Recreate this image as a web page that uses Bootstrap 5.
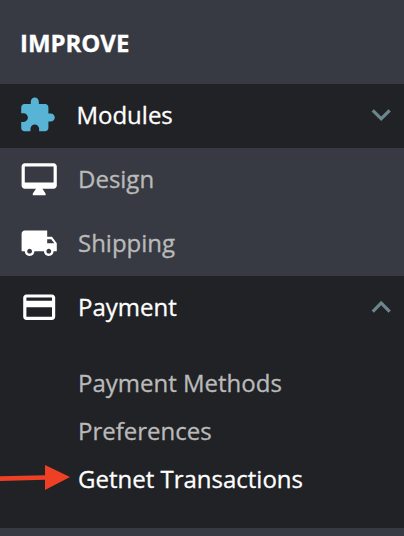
<!DOCTYPE html>
<html lang="en">
<head>
<meta charset="utf-8">
<meta name="viewport" content="width=device-width, initial-scale=1">
<title>Improve menu</title>
<link href="https://cdn.jsdelivr.net/npm/bootstrap@5.3.0/dist/css/bootstrap.min.css" rel="stylesheet">
<style>
body { font-family: "Open Sans", "Noto Sans", sans-serif; background: #373a42; color: #bababa; overflow: hidden; }
.side-menu { height: 536px; font-size: 24px; line-height: 36px; -webkit-text-stroke: .3px currentColor; }
.menu-title { height: 84px; padding: 3px 0 0 20px; font-size: 24px; letter-spacing: -.05px; }
.menu-row { height: 64px; padding: 0 4px 2px 19.6px; }
.menu-row svg { width: 38.4px; height: 38.4px; flex: none; fill: #fff; }
.menu-row .menu-label { margin-left: 20px; }
.menu-row.modules { padding-left: 18px; }
.menu-row.modules .menu-icon { fill: #58b4d4; }
.menu-row .chevron { fill: #6c868e; }
.panel-dark { background: #212226; color: #fff; }
.payment-panel { height: 252px; }
.submenu { padding: 19px 0 0 78px; color: #bababa; }
.submenu li { height: 48px; line-height: 48px; }
.pointer-arrow { left: 0; top: 460px; }
</style>
</head>
<body>
<nav class="side-menu position-relative text-nowrap">
  <h2 class="menu-title d-flex align-items-center m-0 fw-bold text-white">IMPROVE</h2>
  <div class="menu-row modules panel-dark d-flex align-items-center">
    <svg class="menu-icon" viewBox="0 0 24 24"><path d="M20.5 11H19V7c0-1.1-.9-2-2-2h-4V3.5C13 2.12 11.88 1 10.5 1S8 2.12 8 3.5V5H4c-1.1 0-1.99.9-1.99 2v3.8H3.5c1.49 0 2.7 1.21 2.7 2.7s-1.21 2.7-2.7 2.7H2V20c0 1.1.9 2 2 2h3.8v-1.5c0-1.49 1.21-2.7 2.7-2.7 1.49 0 2.7 1.21 2.7 2.7V22H17c1.1 0 2-.9 2-2v-4h1.5c1.38 0 2.5-1.12 2.5-2.5S21.88 11 20.5 11z"/></svg>
    <span class="menu-label">Modules</span>
    <svg class="chevron ms-auto" viewBox="0 0 24 24"><path d="M16.59 8.29L12 12.87 7.41 8.29 6 9.7l6 6 6-6z"/></svg>
  </div>
  <div class="menu-row d-flex align-items-center">
    <svg viewBox="0 0 24 24"><path d="M21 2H3c-1.1 0-2 .9-2 2v12c0 1.1.9 2 2 2h7l-2 3v1h8v-1l-2-3h7c1.1 0 2-.9 2-2V4c0-1.1-.9-2-2-2zm0 12H3V4h18v10z"/></svg>
    <span class="menu-label">Design</span>
  </div>
  <div class="menu-row d-flex align-items-center">
    <svg viewBox="0 0 24 24"><path d="M20 8h-3V4H3c-1.1 0-2 .9-2 2v11h2c0 1.66 1.34 3 3 3s3-1.34 3-3h6c0 1.66 1.34 3 3 3s3-1.34 3-3h2v-5l-3-4zM6 18.5c-.83 0-1.5-.67-1.5-1.5s.67-1.5 1.5-1.5 1.5.67 1.5 1.5-.67 1.5-1.5 1.5zm13.5-9l1.96 2.5H17V9.5h2.5zm-1.5 9c-.83 0-1.5-.67-1.5-1.5s.67-1.5 1.5-1.5 1.5.67 1.5 1.5-.67 1.5-1.5 1.5z"/></svg>
    <span class="menu-label">Shipping</span>
  </div>
  <div class="payment-panel panel-dark">
    <div class="menu-row d-flex align-items-center">
      <svg viewBox="0 0 24 24"><path d="M20 4H4c-1.11 0-1.99.89-1.99 2L2 18c0 1.11.89 2 2 2h16c1.11 0 2-.89 2-2V6c0-1.11-.89-2-2-2zm0 14H4v-6h16v6zm0-10H4V6h16v2z"/></svg>
      <span class="menu-label">Payment</span>
      <svg class="chevron ms-auto" viewBox="0 0 24 24"><path d="M12 8l-6 6 1.41 1.41L12 10.83l4.59 4.58L18 14z"/></svg>
    </div>
    <ul class="submenu list-unstyled m-0">
      <li>Payment Methods</li>
      <li>Preferences</li>
      <li class="text-white">Getnet Transactions</li>
    </ul>
  </div>
  <svg class="pointer-arrow position-absolute" width="74" height="36" viewBox="0 0 74 36"><path fill="#ee4024" d="M0 16.3L45 15.2V5L70 17 45 30V19.8L0 21z"/></svg>
</nav>
<script src="https://cdn.jsdelivr.net/npm/bootstrap@5.3.0/dist/js/bootstrap.bundle.min.js"></script>
</body>
</html>
